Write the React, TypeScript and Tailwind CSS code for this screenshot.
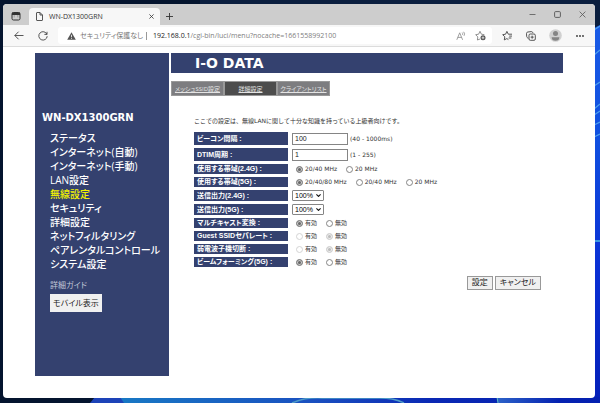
import { useState } from "react";
import type { ReactNode } from "react";

const menuItems = [
  "ステータス",
  "インターネット(自動)",
  "インターネット(手動)",
  "LAN設定",
  "無線設定",
  "セキュリティ",
  "詳細設定",
  "ネットフィルタリング",
  "ペアレンタルコントロール",
  "システム設定"
];

const tabs = ["メッシュSSID設定", "詳細設定", "クライアントリスト"];

function Wallpaper() {
  return (
    <svg className="absolute inset-0 h-full w-full" viewBox="0 0 600 403" preserveAspectRatio="none" aria-hidden="true">
      <defs>
        <linearGradient id="side" x1="0" y1="0" x2="0" y2="1">
          <stop offset="0" stopColor="#1a5be6" />
          <stop offset="0.3" stopColor="#1050e0" />
          <stop offset="0.65" stopColor="#0a30d4" />
          <stop offset="1" stopColor="#0420b8" />
        </linearGradient>
        <linearGradient id="floor" x1="0" y1="0" x2="1" y2="0">
          <stop offset="0" stopColor="#1878c4" />
          <stop offset="0.4" stopColor="#1a50c0" />
          <stop offset="0.65" stopColor="#0a28b4" />
          <stop offset="1" stopColor="#0420b0" />
        </linearGradient>
        <linearGradient id="glow" x1="0" y1="0" x2="1" y2="0">
          <stop offset="0" stopColor="#2c62c8" />
          <stop offset="1" stopColor="#0420b0" />
        </linearGradient>
      </defs>
      <rect width="600" height="403" fill="#04142e" />
      <rect x="200" width="400" height="27" fill="#0a1e3e" />
      <path d="M590 30 L600 25 V403 H590 Z" fill="url(#side)" />
      <path d="M594 30 L600 26 M594 55 L600 50 M594 86 L600 82 M594 109 L600 104 M594 115 L600 111 M594 125 L600 122 M594 137 L600 134" stroke="#4fa0ee" strokeWidth="1.2" />
      <path d="M594 241 H600" stroke="#3c9ae0" strokeWidth="2" />
      <path d="M95 397 H600 V403 H90 Z" fill="#1d43b8" />
      <path d="M120 397 H600 V403 H124 Z" fill="url(#floor)" />
      <path d="M292 403 Q306 397 322 398 H380 Q394 398 404 403" fill="none" stroke="#4f9cc8" strokeWidth="1.5" />
      <path d="M497 397 H560 V403 H498 Z" fill="url(#glow)" />
      <path d="M497 397 L498 403" stroke="#5fc0c0" />
    </svg>
  );
}

function IconButton({ label, className = "", children }: { label: string; className?: string; children: ReactNode }) {
  return (
    <button type="button" aria-label={label} className={`flex shrink-0 items-center justify-center ${className}`}>
      {children}
    </button>
  );
}

function TitleBar() {
  return (
    <div className="flex h-[21px] items-end bg-[#cdcdcd] text-[#333]">
      <IconButton label="タブ操作" className="h-[18px] w-[26px]">
        <svg className="size-[10px]" viewBox="0 0 10 10" fill="none" stroke="#333">
          <rect x="1" y="1.5" width="8" height="7.5" rx="1.5" />
          <path d="M1 2.8 H9" strokeWidth="2.4" />
          <path d="M3.2 4 V6.5 M6.8 4 V6.5" strokeWidth=".6" opacity=".5" />
        </svg>
      </IconButton>
      <div className="flex h-[17px] w-[131px] items-center rounded-t-sm bg-[#f7f7f7] pl-[7px] pr-1">
        <svg className="mr-[6px] h-[9px] w-[7px]" viewBox="0 0 7 9" fill="none" stroke="#444" strokeWidth=".9">
          <path d="M.5 1 Q.5 .5 1 .5 H4 L6.5 3 V8 Q6.5 8.5 6 8.5 H1 Q.5 8.5 .5 8 Z M4 .5 V3 H6.5" />
        </svg>
        <span className="flex-1 text-[7px] leading-[10px]">WN-DX1300GRN</span>
        <IconButton label="タブを閉じる" className="size-[10px]">
          <svg className="size-[5px]" viewBox="0 0 5 5" stroke="#333" strokeWidth=".8"><path d="M.4 .4 L4.6 4.6 M4.6 .4 L.4 4.6" /></svg>
        </IconButton>
      </div>
      <IconButton label="新しいタブ" className="h-[17px] w-[18px]">
        <svg className="size-[7px]" viewBox="0 0 7 7" stroke="#333" strokeWidth=".9"><path d="M3.5 0 V7 M0 3.5 H7" /></svg>
      </IconButton>
      <div className="flex-1" />
      <div className="flex h-[21px]">
        <IconButton label="最小化" className="w-[25px]">
          <svg className="size-[7px]" viewBox="0 0 7 7" stroke="#555" strokeWidth=".8"><path d="M.5 3.5 H6.5" /></svg>
        </IconButton>
        <IconButton label="最大化" className="w-[25px]">
          <svg className="size-[7px]" viewBox="0 0 7 7" fill="none" stroke="#555" strokeWidth=".9"><rect x=".6" y=".6" width="5.8" height="5.8" rx="1" /></svg>
        </IconButton>
        <IconButton label="閉じる" className="w-[25px]">
          <svg className="size-[7px]" viewBox="0 0 7 7" stroke="#555" strokeWidth=".8"><path d="M.6 .6 L6.4 6.4 M6.4 .6 L.6 6.4" /></svg>
        </IconButton>
      </div>
    </div>
  );
}

function AddressBar() {
  return (
    <div className="flex h-[22px] items-center border-b border-[#dcdcdc] bg-[#f7f7f7] pl-[9px] pr-1">
      <IconButton label="戻る" className="w-[14px]">
        <svg className="h-[9px] w-[10px]" viewBox="0 0 10 9" fill="none" stroke="#444" strokeWidth=".9"><path d="M9.5 4.5 H.8 M4.6 .7 L.8 4.5 L4.6 8.3" /></svg>
      </IconButton>
      <IconButton label="更新" className="ml-[10px] w-[14px]">
        <svg className="size-[10px]" viewBox="0 0 10 10" fill="none" stroke="#444" strokeWidth=".9"><path d="M8.9 3.3 A4.2 4.2 0 1 0 9.2 5.2 M9 .8 V3.4 H6.4" /></svg>
      </IconButton>
      <div className="ml-[8px] flex h-[17px] min-w-0 flex-1 items-center rounded-[3px] bg-white pl-[9px] pr-[6px] text-[7px] leading-[10px]">
        <svg className="h-[8px] w-[9px] shrink-0" viewBox="0 0 9 8">
          <path d="M4.5 .3 L8.8 7.8 H.2 Z" fill="#555" />
          <path d="M4.5 2.8 V5.2 M4.5 5.9 V6.8" stroke="#fff" strokeWidth=".8" />
        </svg>
        <span className="ml-[4px] shrink-0 text-[#767676]">セキュリティ保護なし</span>
        <span className="ml-[3px] mr-[6px] h-[8px] w-px shrink-0 bg-[#999]" />
        <span className="flex-1 truncate text-[#808080]">
          <span className="text-[#222]">192.168.0.1</span>/cgi-bin/luci/menu?nocache=1661558992100
        </span>
        <IconButton label="音声で読み上げる" className="w-[12px]">
          <svg className="size-[10px]" viewBox="0 0 10 10" fill="none" stroke="#888" strokeWidth=".8">
            <path d="M.8 8.8 L3.7 1.8 L6.6 8.8 M1.8 6.4 H5.6 M6.2 1.6 Q7.2 2.6 6.4 3.8 M7.6 .8 Q9.4 2.6 8 4.8" />
          </svg>
        </IconButton>
        <IconButton label="お気に入りに追加" className="ml-[8px] w-[11px]">
          <svg className="size-[11px]" viewBox="0 0 11 11" fill="none" stroke="#777" strokeWidth=".8">
            <path d="M5 9 L2.4 10 L2.8 6.9 L.7 4.7 L3.6 4.2 L5 1.3 L6.4 4.2 L9.4 4.7" />
            <circle cx="8" cy="7.8" r="2.5" fill="#555" stroke="none" />
            <path d="M8 6.4 V9.2 M6.6 7.8 H9.4" stroke="#fff" strokeWidth=".7" />
          </svg>
        </IconButton>
      </div>
      <IconButton label="お気に入り" className="ml-[9px] w-[12px]">
        <svg className="size-[11px]" viewBox="0 0 11 11" fill="none" stroke="#444" strokeWidth=".9">
          <path d="M6.4 9.6 L4.8 8.6 L2.3 9.9 L2.8 6.8 L.7 4.7 L3.6 4.2 L4.9 1.4 L6.3 4.2 M6.3 4.2 H10 M7.2 6.1 H10 M6.6 8 H9.4" />
        </svg>
      </IconButton>
      <IconButton label="コレクション" className="ml-[12px] w-[12px]">
        <svg className="size-[10px]" viewBox="0 0 10 10" fill="none" stroke="#444" strokeWidth=".9">
          <rect x="3" y="3" width="6.3" height="6.3" rx="1.3" />
          <path d="M6.15 4.6 V7.7 M4.6 6.15 H7.7 M2.4 7.2 L1.6 6.9 Q.9 6.5 .7 5.6 L.5 2.6 Q.5 1.2 1.8 1 L5.2 .6 Q6.6 .6 7 1.9" />
        </svg>
      </IconButton>
      <IconButton label="プロファイル" className="mx-[11px] w-[14px]">
        <svg className="size-[13px]" viewBox="0 0 13 13">
          <circle cx="6.5" cy="6.5" r="6.3" fill="#d0d0d0" />
          <circle cx="6.5" cy="4.5" r="2.5" fill="#858585" />
          <path d="M2.6 8.2 H10.4 Q10.2 11.8 6.5 11.8 Q2.8 11.8 2.6 8.2 Z" fill="#858585" />
        </svg>
      </IconButton>
      <IconButton label="設定など" className="mr-1 w-[14px]">
        <svg className="h-[2px] w-[8px]" viewBox="0 0 8 2" fill="#333"><circle cx="1" cy="1" r=".9" /><circle cx="4" cy="1" r=".9" /><circle cx="7" cy="1" r=".9" /></svg>
      </IconButton>
    </div>
  );
}

function Sidebar() {
  return (
    <nav className="w-[134px] shrink-0 bg-[#34416f] pl-[7px] pt-[58px] text-white">
      <h1 className="font-['DejaVu_Sans'] text-[10px] font-bold leading-[14px]">WN-DX1300GRN</h1>
      <ul className="ml-2 mt-[6px] text-[10px] leading-[14px]">
        {menuItems.map((item) => (
          <li key={item}>
            <a href="#" className={item === "無線設定" ? "font-medium text-[#f2f200]" : "font-medium"}>{item}</a>
          </li>
        ))}
      </ul>
      <a href="#" className="ml-2 mt-[8px] block text-[8px] leading-[12px] text-[#c3c8d8]">詳細ガイド</a>
      <button type="button" className="ml-2 mt-[3px] block h-[18px] w-[52px] bg-[#f0f0f0] text-[8px] leading-[12px] text-[#222]">モバイル表示</button>
    </nav>
  );
}

interface FieldProps {
  label: string;
  htmlFor?: string;
  height: string;
  children: ReactNode;
}

function Field({ label, htmlFor, height, children }: FieldProps) {
  const boxClass = "flex w-[94px] shrink-0 items-center bg-[#34416f] pl-[3px] font-['Liberation_Sans','Noto_Sans_CJK_JP',sans-serif] text-[7px] font-bold leading-[10px] text-white";
  return (
    <div className={`flex items-stretch gap-1 ${height}`}>
      {htmlFor ? (
        <label htmlFor={htmlFor} className={boxClass}>{label}&nbsp;:</label>
      ) : (
        <span className={boxClass}>{label}&nbsp;:</span>
      )}
      <div className="flex items-center">{children}</div>
    </div>
  );
}

interface TextFieldProps {
  id: string;
  label: string;
  initial: string;
  range: string;
}

function TextField({ id, label, initial, range }: TextFieldProps) {
  const [value, setValue] = useState(initial);
  return (
    <Field label={label} htmlFor={id} height="h-[13px]">
      <input
        id={id}
        type="text"
        value={value}
        onChange={(e) => setValue(e.target.value)}
        className="h-[12px] w-[56px] border border-[#858585] bg-white px-[2px] font-['Liberation_Sans'] text-[7px] leading-[10px] text-[#222] outline-none"
      />
      <span className="ml-[2px] text-[6px]">{range}</span>
    </Field>
  );
}

function SelectField({ id, label }: { id: string; label: string }) {
  return (
    <Field label={label} htmlFor={id} height="h-[11px]">
      <div className="relative flex items-center">
        <select id={id} defaultValue="100%" className="h-[11px] w-[32px] appearance-none rounded-[1px] border border-[#858585] bg-white pl-[2px] font-['Liberation_Sans'] text-[7px] leading-[9px] text-black">
          <option>100%</option>
          <option>50%</option>
          <option>25%</option>
        </select>
        <svg className="pointer-events-none absolute right-[3px] h-[3px] w-[5px]" viewBox="0 0 5 3" fill="none" stroke="#111" strokeWidth="1.1">
          <path d="M.4 .4 L2.5 2.4 L4.6 .4" />
        </svg>
      </div>
    </Field>
  );
}

interface RadioFieldProps {
  name: string;
  label: string;
  options: string[];
  initial: string;
  disabled?: boolean;
}

function RadioField({ name, label, options, initial, disabled }: RadioFieldProps) {
  const [selected, setSelected] = useState(initial);
  return (
    <Field label={label} height="h-[10px]">
      <div role="radiogroup" aria-label={label} className="ml-1 flex items-center gap-[9px]">
        {options.map((option) => (
          <label key={option} className="flex items-center gap-[2px] text-[6px] leading-[10px]">
            <input
              type="radio"
              name={name}
              checked={selected === option}
              disabled={disabled}
              onChange={() => setSelected(option)}
              className="size-[7px] appearance-none rounded-full border border-[#858585] bg-white checked:bg-[#666] checked:shadow-[inset_0_0_0_1px_#ccc] disabled:border-[#d4d4d4] disabled:checked:bg-[#bbb] disabled:checked:shadow-[inset_0_0_0_1px_#eee]"
            />
            {option}
          </label>
        ))}
      </div>
    </Field>
  );
}

function SettingsForm() {
  const buttonClass = "h-[14px] border border-[#999] bg-[#f0f0f0] px-1 text-[8px] leading-[12px] text-[#222]";
  return (
    <form onSubmit={(e) => e.preventDefault()} className="pl-[23px] pr-[22px] pt-[19px] font-['DejaVu_Sans','Noto_Sans_CJK_JP',sans-serif] text-[#333]">
      <p className="whitespace-nowrap text-[6px] leading-[12px] [font-feature-settings:normal]">ここでの設定は、無線LANに関して十分な知識を持っている上級者向けです。</p>
      <div className="mt-[5px] flex flex-col gap-[3px]">
        <TextField id="beacon" label="ビーコン間隔" initial="100" range="(40 - 1000ms)" />
        <TextField id="dtim" label="DTIM周期" initial="1" range="(1 - 255)" />
        <RadioField name="band24" label="使用する帯域(2.4G)" options={["20/40 MHz", "20 MHz"]} initial="20/40 MHz" />
        <RadioField name="band5" label="使用する帯域(5G)" options={["20/40/80 MHz", "20/40 MHz", "20 MHz"]} initial="20/40/80 MHz" />
        <SelectField id="power24" label="送信出力(2.4G)" />
        <SelectField id="power5" label="送信出力(5G)" />
        <RadioField name="multicast" label="マルチキャスト変換" options={["有効", "無効"]} initial="有効" />
        <RadioField name="guest" label="Guest SSIDセパレート" options={["有効", "無効"]} initial="無効" disabled />
        <RadioField name="weak" label="弱電波子機切断" options={["有効", "無効"]} initial="無効" disabled />
        <RadioField name="beamforming" label="ビームフォーミング(5G)" options={["有効", "無効"]} initial="有効" />
      </div>
      <div className="mt-[9px] flex justify-end gap-[2px]">
        <button type="submit" className={buttonClass}>設定</button>
        <button type="reset" className={buttonClass}>キャンセル</button>
      </div>
    </form>
  );
}

export default function App() {
  return (
    <div className="relative flex min-h-screen flex-col bg-[#04142e] pb-[5px] pl-[3px] pr-[5px] pt-1 font-['Open_Sans','Noto_Sans_CJK_JP',sans-serif] [font-feature-settings:'palt']">
      <Wallpaper />
      <div className="relative flex flex-1 flex-col overflow-hidden rounded-[4px] bg-white">
        <TitleBar />
        <AddressBar />
        <div className="flex flex-1 gap-[2px] pb-[22px] pl-8 pr-8 pt-[6px]">
          <Sidebar />
          <main className="min-w-0 flex-1">
            <header className="flex h-5 items-center bg-[#34416f] pl-6 font-['DejaVu_Sans'] text-[14px] font-bold leading-none text-white">I-O DATA</header>
            <div className="mt-[8px] flex">
              {tabs.map((tab) => (
                <a
                  key={tab}
                  href="#"
                  className={`flex h-[15px] w-[53px] items-center justify-center whitespace-nowrap border border-[#999] text-[6px] leading-[10px] text-[#e4e4e4] underline ${tab === "詳細設定" ? "bg-[#4d4d4d]" : "bg-[#7d7d80]"}`}
                >
                  {tab}
                </a>
              ))}
            </div>
            <SettingsForm />
          </main>
        </div>
      </div>
    </div>
  );
}
